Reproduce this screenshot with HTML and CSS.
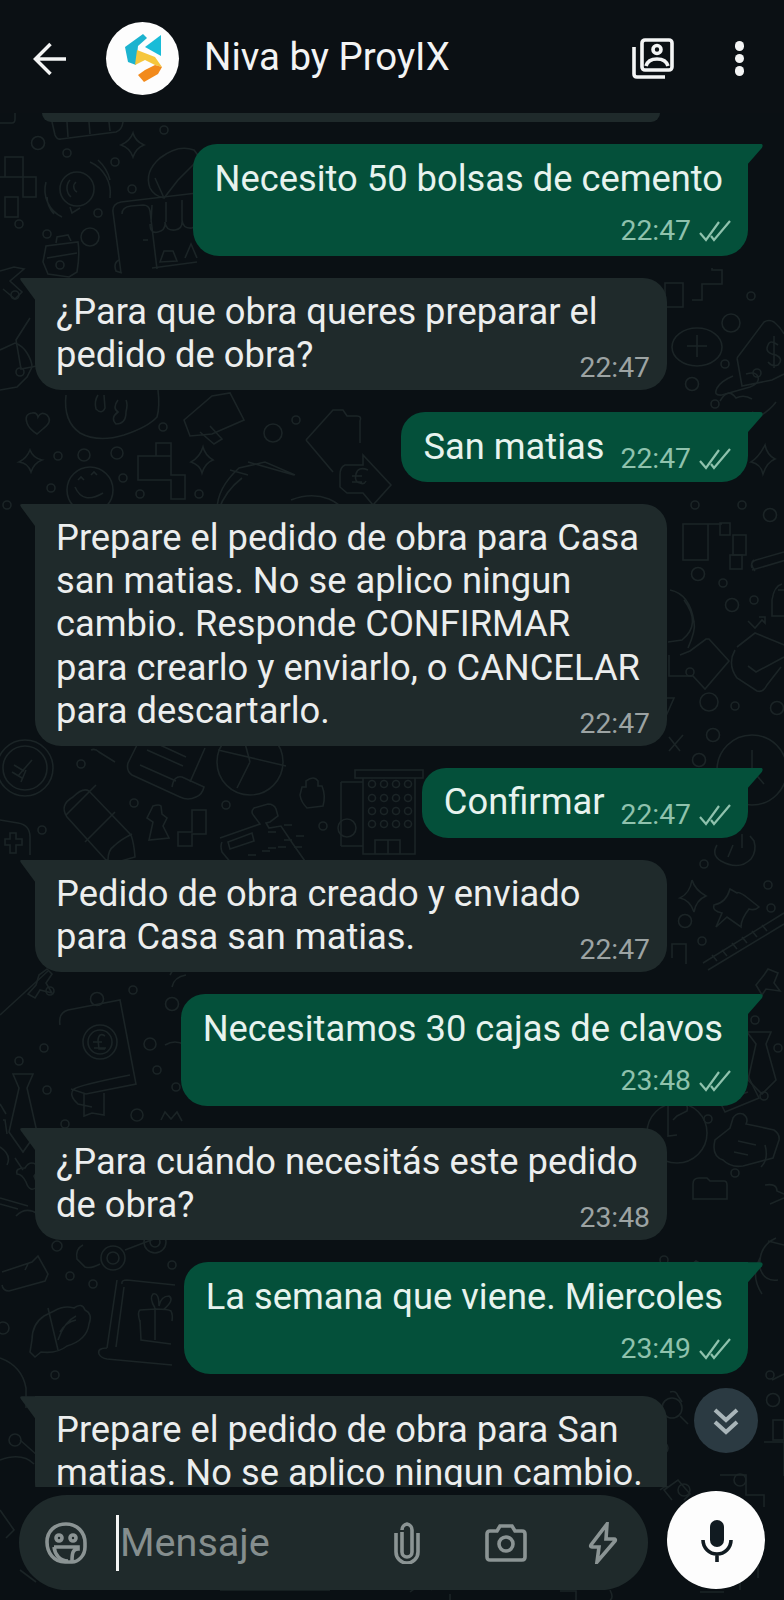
FILE: index.html
```html
<!DOCTYPE html>
<html>
	<head>
		<title>Niva by ProyIX</title>
		<link rel="stylesheet" href="styles.css">
	</head>
	<body>
		<div class="phone">
			<!-- wallpaper doodles sit behind everything -->
			<svg class="wallpaper" viewBox="0 0 784 1600" width="784" height="1600">
				<!-- small dots -->
				<circle cx="38" cy="143" r="6.5"/><circle cx="67" cy="153" r="4"/><circle cx="115" cy="162" r="4"/><circle cx="164" cy="130" r="4"/><circle cx="132" cy="189" r="4"/><circle cx="98" cy="213" r="4"/><circle cx="19" cy="224" r="4"/><circle cx="47" cy="234" r="4"/><circle cx="90" cy="237" r="9"/>
				<circle cx="15" cy="295" r="4"/><circle cx="163" cy="427" r="4"/><circle cx="273" cy="433" r="9"/><circle cx="296" cy="420" r="4"/><circle cx="58" cy="456" r="4"/><circle cx="84" cy="455" r="6"/><circle cx="117" cy="453" r="6"/><circle cx="123" cy="478" r="4"/><circle cx="51" cy="488" r="4"/><circle cx="140" cy="494" r="4"/><circle cx="199" cy="494" r="4"/><circle cx="7" cy="505" r="4"/>
				<circle cx="81" cy="764" r="4"/><circle cx="134" cy="803" r="4"/><circle cx="226" cy="805" r="4"/><circle cx="42" cy="830" r="4"/><circle cx="323" cy="826" r="4"/>
				<circle cx="50" cy="991" r="4"/><circle cx="97" cy="999" r="6.5"/><circle cx="133" cy="990" r="4"/><circle cx="172" cy="1004" r="6.5"/><circle cx="44" cy="1048" r="4"/><circle cx="150" cy="1044" r="6"/><circle cx="19" cy="1061" r="4"/><circle cx="157" cy="1070" r="4"/><circle cx="47" cy="1090" r="4"/><circle cx="176" cy="1087" r="4"/><circle cx="137" cy="1115" r="6"/><circle cx="65" cy="1124" r="4"/>
				<circle cx="57" cy="1246" r="5"/><circle cx="172" cy="1265" r="4"/><circle cx="70" cy="1276" r="4"/><circle cx="93" cy="1284" r="4"/><circle cx="55" cy="1375" r="4"/>
				<circle cx="751" cy="296" r="4"/><circle cx="731" cy="323" r="9"/><circle cx="725" cy="364" r="4"/><circle cx="692" cy="384" r="6.5"/><circle cx="715" cy="404" r="4"/><circle cx="695" cy="505" r="4"/><circle cx="742" cy="505" r="4"/><circle cx="770" cy="515" r="6.5"/><circle cx="698" cy="574" r="6.5"/><circle cx="723" cy="583" r="4"/><circle cx="732" cy="605" r="6.5"/><circle cx="754" cy="600" r="4"/><circle cx="690" cy="672" r="4"/><circle cx="709" cy="702" r="9"/><circle cx="735" cy="706" r="4"/><circle cx="777" cy="708" r="6.5"/><circle cx="713" cy="735" r="6.5"/><circle cx="699" cy="760" r="6.5"/>
				<circle cx="704" cy="864" r="4"/><circle cx="685" cy="921" r="6.5"/><circle cx="768" cy="885" r="4"/><circle cx="771" cy="908" r="4"/><circle cx="702" cy="941" r="4"/><circle cx="755" cy="1020" r="4"/><circle cx="778" cy="1048" r="4"/><circle cx="688" cy="1070" r="4"/><circle cx="764" cy="1096" r="4"/><circle cx="708" cy="1119" r="4"/><circle cx="735" cy="1173" r="4"/>
				<circle cx="664" cy="1260" r="4"/><circle cx="773" cy="1400" r="6.5"/><circle cx="770" cy="1375" r="4"/><circle cx="684" cy="1490" r="6"/><circle cx="740" cy="1480" r="6"/>
				<!-- top left -->
				<path d="M52 122l3 13q2 5 6 4l55-7q6-2 7-10M68 137l-1-15M90 134l-1-12M110 131l-1-9"/>
				<path d="M0 123h12q3 0 3-4v-6"/>
				<path d="M133 133q2 8 11 12q-8 3-11 12q-3-9-12-12q9-4 12-12z"/>
				<path d="M5 157h18v20h13v20h-13v-20h-18zM5 197h13v20h-13zM5 177h-5"/>
				<circle cx="77" cy="189" r="17"/><path d="M70 207l2 6l8-5M70 180a12 12 0 0 0 1 17M76 182a6 6 0 0 0 1 10M90 162a34 34 0 0 1 20 36M98 160a40 40 0 0 1 12 20M62 217a30 30 0 0 1-16-35M54 214a26 26 0 0 1-7-17"/>
				<path d="M150 188q-6-16 10-30q18-14 34-8l6 8l-22 22l-14 18q-10-2-14-10zM155 178l9 20"/>
				<path d="M113 212q-1-8 8-10l76-9M121 273l-8-61M122 214q0-7 9-8l12-1q6 0 7 6l7 58M143 240h5M122 273l-6-2q-3-8 3-11M150 224q0 10 8 8q8-2 7-10q1 9 10 8q8-1 7-10q1 9 10 8l4-2M152 205l-1 17M166 202v20M182 200v20"/>
				<path d="M160 262l4-11h9l4 10zM185 258l6-14l6 14M152 268l45-6"/>
				<path d="M43 262l3-16l32-4q2 12-1 30l-8 5l-21-3zM56 243l1-6l11-2l3 6M47 258l30-5"/><circle cx="60" cy="265" r="4"/>
				<path d="M0 271l14-4l10 2l-14 12l12 11l-7 7l-12-10"/>
				<!-- below first incoming bubble -->
				<path d="M0 350l15-7q8 3 12 10q5 8 5 14l-5 10l-10 10l-17 3"/>
				<path d="M30 318l-14 22l5 29l26-5"/><circle cx="20" cy="372" r="4"/>
				<path d="M27 423q-3-9 5-10q5-1 6 4q3-6 9-2q6 6-3 13l-7 6q-8-5-10-11z"/>
				<path d="M66 395q-3 26 14 38q18 10 44 2q24-8 33-18q3-10 1-27M98 395q-4 6-2 14q6 6 9-1l-1-13M118 400q-6 8 0 12q-8 6-2 12q10 0 10-12q2-8 0-12"/>
				<path d="M30 450q3 8 12 10q-8 3-11 12q-3-9-12-10q8-4 11-12z"/>
				<circle cx="90" cy="490" r="23"/><path d="M75 487q8 18 28 6M78 480l3-3l3 3M91 475l3-3l3 3"/>
				<path d="M138 480v-24h18v-13h15v32h14v24h-14v-19h-33zM156 456h15"/>
				<path d="M203 447q2 8 10 13q-8 3-11 13q-2-8-11-11q9-5 12-15z"/>
				<path d="M184 420l28-24l18-3l14 27l-32 14l-22 2zM200 432l14 12l8-5l-12-13"/>
				<path d="M217 510q0-22 22-42l26-6l30 13M248 462l46 13M218 512q6-20 24-34M230 470l18 5"/><path d="M291 500q20-8 38-1q18 8 16 22"/>
				<path d="M306 440l27-30h10l4 6h10q5 0 3 5v22M306 440l27 32M340 475q0-8 5-10h18v-10l28 30l-18 20l-10-12h-16l-7-6z"/><path d="M368 470q-10-4-12 4q-2 8 4 9q4 2 6-2M352 476h10M352 482h10"/>
				<!-- right side upper -->
				<path d="M665 283h18v24h-18zM692 300h10v-16h20v-14h-10v-2"/><ellipse cx="697" cy="347" rx="25" ry="19"/><path d="M697 335v22M687 346h20"/>
				<path d="M737 358l27-36q5-3 10 0q7 6 10 12M737 358l5 28l30-6l12-6M733 376q-12 5-16 12q-4 8 5 7l28-8q10-4 8-10q-2-6-12-3"/><circle cx="757" cy="373" r="4"/><path d="M778 345q-8-6-10 0q-4 8 8 10q8 4 2 10q-6 2-10-3M774 336v32"/>
				<path d="M720 401q8-14 16-3q8-4 16 1M752 412l8 4q10-6 16-14M752 412q6 6 8 4"/>
				<path d="M765 445q2 10 10 14q-8 3-12 15q-2-10-12-12q8-5 14-17z"/>
				<path d="M722 524h-14v36h-25v-36h25zM720 523h10v12h-10zM733 535h13v20h-13z"/>
				<path d="M730 555h12v14h-12z"/>
				<path d="M752 568q-2-6 4-8l28-8M755 571q-6-8-1-11M752 570l34-10"/>
				<path d="M778 590h6M772 600q2-14 10-16M772 600v16h12"/>
				<path d="M684 600q18 24-2 40l-14 2M670 590q20 4 24 32q2 8-6 26"/>
				<path d="M680 655l10-4l16-12h3l20 22l-24 28l-12-13h-24v-21"/>
				<path d="M748 621l7 7l7-8l3 3v-6h-6"/>
				<path d="M737 647l18-14l34 14M735 650q-8 14 2 28l20 13q6 2 10-6l14-18M748 666l8 6l28-15"/>
				<path d="M664 698h10l-8 18"/>
				<path d="M669 737l11 14M683 735l-14 16"/><circle cx="752" cy="770" r="35"/><path d="M752 750v20l12 14"/>
				<!-- building row -->
				<circle cx="25" cy="768" r="28"/><circle cx="25" cy="768" r="22"/><path d="M32 760l-14 16M26 770l-5 12M14 765l10 6M12 772l10 6"/>
				<path d="M91 750q4-2 8 2l16 10"/>
				<path d="M73 797q-14 8-6 20l38 42q5 4 16 2l14-4q-1-14-4-22l-42-44q-6-4-16 6zM66 815l30-30M85 842l30-30M108 860q0-10 6-14q6-6 18-12"/>
				<path d="M0 820l18 3q12 2 12 14v18M5 845v-6h5v-6h6v6h6v6h-6v8h-6v-8z"/>
				<path d="M137 745l-9 18q-2 8 4 12l48 22q8 4 16 0q6-2 8-10l-22-10q-8-2-10 10M205 748l-15 34M147 750l36 16M140 765l36 16M160 745l26 12"/>
				<circle cx="250" cy="762" r="33"/><path d="M250 762l-13 26M218 750l68 16M250 762l-8-30"/>
				<path d="M300 795l2-8h4v-6q8-6 12 0v5h4q4 10 1 20l-16 2q-6-6-7-13z"/>
				<path d="M150 812l3-6q6-2 8 0l1 8l5 4l-4 8l6 12l-20 2l4-18l-6-4z"/>
				<path d="M192 822v-12h14v24h-14v12h-14v-14h14zM192 834h14"/>
				<path d="M220 838l40-14l-6-8q-4-4 0-8l14-4q6 0 8 5l2 7l-8 6l-4 1l3 5l12-2l12 18l14 20M222 842q-2 4 0 10l10 12h40M228 842l24-9l2 8l-24 8z"/>
				<path d="M268 832h8M284 825h8M268 848h8M284 840h8M296 836h8M248 855h8M262 851h8M278 847h8M294 847h8"/>
				<path d="M355 770h68v8h-68zM363 778v76h52v-76M341 782v64M341 782h22M341 846h22"/><circle cx="347" cy="828" r="9"/><path d="M375 854v-14h25v14M388 840v14"/>
				<circle cx="372" cy="784" r="3.500"/><circle cx="384" cy="784" r="3.500"/><circle cx="396" cy="784" r="3.500"/><circle cx="408" cy="784" r="3.500"/><circle cx="372" cy="798" r="3.500"/><circle cx="384" cy="798" r="3.500"/><circle cx="396" cy="798" r="3.500"/><circle cx="408" cy="798" r="3.500"/><circle cx="372" cy="811" r="3.500"/><circle cx="384" cy="811" r="3.500"/><circle cx="396" cy="811" r="3.500"/><circle cx="408" cy="811" r="3.500"/><circle cx="372" cy="824" r="3.500"/><circle cx="384" cy="824" r="3.500"/><circle cx="396" cy="824" r="3.500"/><circle cx="408" cy="824" r="3.500"/>
				<!-- mid strip -->
				<path d="M60 960h-14M0 1015l48-44"/><path d="M170 975l7-12"/>
				<path d="M28 994l8-9l3-10l8-6l5 5l-6 9l6 10l-12-3l-5 8z"/>
				<path d="M60 1025q-2-12 8-15l52-10l16 84l-50 10l-15-5M130 1075q-50 10-56 14q-6 6 4 15l14 3M84 1094v22l8-3l12 2v-22"/><circle cx="100" cy="1042" r="17"/><circle cx="100" cy="1042" r="12"/><path d="M105 1036q-6-4-7 4l1 9h6M94 1048h12M93 1042h9"/>
				<path d="M13 1074h20l-6 14l10 44l-14 20l-14-20l10-44z"/><path d="M0 1104l6 10"/>
				<path d="M186 975q-12 2-14 12M165 1045q10-6 20 0"/><path d="M161 1120l4-8l6 7l6-7l5 9"/>
				<!-- right mid -->
				<path d="M717 845q-6 10 4 16q18 10 30-2q6-8 3-18l-4-5M733 845l-5 12M742 848v-14"/>
				<path d="M692 880q3 10 14 16q-10 4-12 16q-4-12-14-14q10-5 12-18z"/>
				<path d="M714 905q12-2 16-16l7 4q2-2 12 6l10 8q-4 4-10 2q-8 10-8 18l-14-10l-11 10l6-14q-10-2-8-8z"/>
				<path d="M703 963l81-50M708 970l76-46M712 955l5 6M722 950l5 6M732 943l5 6M742 937l5 6M752 931l5 6M762 925l5 6"/>
				<path d="M672 958v-14h14v20"/>
				<path d="M756 985l8-10l4-6l10 4l-4 10l6 8l-14-2l-4 6z"/>
				<path d="M747 1032h24l-5 12l10 36l-14 14l-14-14l8-36z"/><path d="M667 1060h6q8 2 14-2q6 0 4 6"/>
				<path d="M705 1072l34-14l20 40l-34 14zM712 1080l24-8M718 1090l24-8M724 1100l24-8"/>
				<path d="M730 1128l3-10q4-6 10-4q6 4 3 10l10 2l18 4q6 4 5 10l-6 18l-30 8q-12 2-20-6q-12-4-8-20z"/><path d="M738 1141l18 4M734 1152l14 3M765 1145q4 14-4 22"/>
				<path d="M667 1103q8 4 14 0q8 0 6 8l-10 5l-4 4"/><circle cx="677" cy="1133" r="30"/><path d="M668 1106v30l9-1"/>
				<path d="M693 1184q0-6 6-6h8l3 3h14q3 0 3 4v14h-34z"/>
				<path d="M765 1185q12-2 12 6l7 3"/><path d="M770 1204l14-6"/>
				<!-- lower left and right -->
				<path d="M0 1147q12 8 7 18M3 1120h2l2 14"/>
				<path d="M15 1158l8 12M25 1168q6-10 15 0l-6 8l4 10q-8 8-12-4q-4-8-9-8q-2-6 8-6z"/>
				<path d="M0 1198l28 8M0 1204l18 5M16 1216q10-10 22-2"/>
				<path d="M83 1245q-8 4-6 14l8 8q6 2 15-3"/><circle cx="113" cy="1258" r="12"/><circle cx="113" cy="1258" r="6"/><path d="M125 1250l34-13"/><circle cx="155" cy="1242" r="11"/><circle cx="155" cy="1242" r="5"/>
				<path d="M2 1272l30-10l6-6l10 18l-3 7l-36 10q-6 0-7-6M28 1264l-3 6"/>
				<circle cx="3" cy="1328" r="6"/>
				<path d="M32 1340q0-16 12-24l10-5q10-6 20-3q8-6 11 2q8 4 4 14q-2 16-22 22q-10 8-26 6l-6 5l-5-5zM48 1308l10 42M58 1340q6-18 18-24M60 1332q6-10 16-12"/>
				<path d="M117 1280l-10 68M122 1284q-1-4 5-4l48 5M124 1287l-8 60M107 1348q-10 0-8 6q2 4 8 5l65 6"/><path d="M140 1322q-3-10 0-12l16-1q12 0 15 2q2 4 1 10M140 1320l1 20l30 4M155 1308v32M155 1308q-6-10-2-14q6-2 6 12q2-10 10-10q6 4-6 14"/>
				<path d="M0 1358q22 8 26 30v20M70 1412l18 14q6 8 0 10M84 1400l16 12"/>
				<circle cx="15" cy="1440" r="6"/><path d="M0 1460q22-8 34 4M20 1440l34 30"/>
				<path d="M0 1510l14 20l-8 8M20 1570l16 12"/>
				<path d="M760 1258q-10 18 2 36M776 1238q-18 8-16 30q4 14 18 12M668 1265l15 3l-8 16l-20-2M784 1245l-16-4"/>
				<path d="M668 1283l28-22q8 4 12 12l-6 8l-24 10M686 1265h-14v10"/>
				<path d="M690 1310q14 10 30 0M670 1392q6-2 8 4l4 6"/>
				<path d="M772 1380l12-6M764 1442h20v34"/><circle cx="662" cy="1448" r="6"/><circle cx="672" cy="1408" r="10"/><path d="M680 1416l8 8"/>
				<path d="M773 1420h11v20h-11z"/>
				<path d="M660 1490q6-5 8-3M672 1500l-8-10l14-10l12 14l-6 6M720 1475h26v20h18v12M740 1590v-24h18v12M700 1592h24"/>
				<!-- between composer and bubble -->
				<path d="M410 1592q12-10 22-2M220 1590h110M450 1594v6M560 1591h16v9M610 1590q4 8 0 10"/>
			</svg>

			<header class="topbar">
				<svg class="back" viewBox="0 0 34 34" width="34" height="34"><path d="M33 17H3M17.500 2L2.500 17L17.500 32"/></svg>
				<div class="avatar">
					<svg viewBox="6 7 73 73" width="73" height="73">
						<path fill="#1cb3cf" d="M25 32L43 19L47 23L38 31L36 50L28 47z"/>
						<path fill="#19bcd8" d="M45 32L61 20V41z"/>
						<path fill="#f6c63c" d="M37 35L55 42L62 52L55 50L45 45L35 50z"/>
						<path fill="#f28a1c" d="M38 60L45 55L55 50L62 52L58 59L44 67z"/>
					</svg>
				</div>
				<span class="title">Niva by ProyIX</span>
				<svg class="gallery" viewBox="0 0 42 41" width="42" height="41">
					<rect x="10" y="2" width="30" height="30" rx="3"/>
					<path d="M2 9V36q0 3 3 3H33"/>
					<circle cx="25" cy="11.500" r="4"/>
					<path d="M14 28q2-7 11-7q9 0 11 7"/>
				</svg>
				<div class="dots"><i></i><i></i><i></i></div>
			</header>

			<main class="messages">
				<div class="peek"></div>

				<div class="msg out">
					<p>Necesito 50 bolsas de cemento</p>
					<span class="meta">22:47 <svg class="ticks" viewBox="0 0 32 22" width="32" height="22"><path d="M1 13l6 7L20 2M12 16l3 4L31 1"/></svg></span>
				</div>
				<div class="msg in">
					<p>¿Para que obra queres preparar el pedido de obra?<span class="meta">22:47</span></p>
				</div>
				<div class="msg out short">
					<p>San matias</p>
					<span class="meta">22:47 <svg class="ticks" viewBox="0 0 32 22" width="32" height="22"><path d="M1 13l6 7L20 2M12 16l3 4L31 1"/></svg></span>
				</div>
				<div class="msg in">
					<p>Prepare el pedido de obra para Casa san matias. No se aplico ningun cambio. Responde CONFIRMAR para crearlo y enviarlo, o CANCELAR para descartarlo.<span class="meta">22:47</span></p>
				</div>
				<div class="msg out short">
					<p>Confirmar</p>
					<span class="meta">22:47 <svg class="ticks" viewBox="0 0 32 22" width="32" height="22"><path d="M1 13l6 7L20 2M12 16l3 4L31 1"/></svg></span>
				</div>
				<div class="msg in">
					<p>Pedido de obra creado y enviado para Casa san matias.<span class="meta">22:47</span></p>
				</div>
				<div class="msg out">
					<p>Necesitamos 30 cajas de clavos</p>
					<span class="meta">23:48 <svg class="ticks" viewBox="0 0 32 22" width="32" height="22"><path d="M1 13l6 7L20 2M12 16l3 4L31 1"/></svg></span>
				</div>
				<div class="msg in">
					<p>¿Para cuándo necesitás este pedido de obra?<span class="meta">23:48</span></p>
				</div>
				<div class="msg out">
					<p>La semana que viene. Miercoles</p>
					<span class="meta">23:49 <svg class="ticks" viewBox="0 0 32 22" width="32" height="22"><path d="M1 13l6 7L20 2M12 16l3 4L31 1"/></svg></span>
				</div>
				<div class="msg in">
					<p>Prepare el pedido de obra para San matias. No se aplico ningun cambio.</p>
				</div>
			</main>

			<button class="scroll-down">
				<svg viewBox="0 0 26 28" width="26" height="28"><path d="M2 3l11 10L24 3M2 15l11 10L24 15"/></svg>
			</button>

			<footer class="bottom">
				<div class="composer">
					<svg class="sticker" viewBox="0 0 42 42" width="42" height="42">
						<path d="M27 40H20C9 40 2 31 2 20C2 9 10 2 21 2C32 2 40 10 40 21V25C40 34 33 40 27 40z"/>
						<path d="M9 25H33V27C28 27 27 31 27 39M9 25C10 33 15 39 23 39"/>
						<circle cx="14" cy="16" r="3"/><circle cx="28" cy="16" r="3"/>
					</svg>
					<span class="caret"></span>
					<span class="placeholder">Mensaje</span>
					<svg class="clip" viewBox="0 0 26 42" width="26" height="42"><path d="M8 10V30a5 5 0 0 0 10 0V8a6 6 0 0 0-5-6a6 6 0 0 0-5 6M2 11V30a11 11 0 0 0 22 0V11"/></svg>
					<svg class="camera" viewBox="0 0 42 38" width="42" height="38">
						<path d="M2 10q0-3 3-3h7l3-5h12l3 5h7q3 0 3 3v23q0 3-3 3H5q-3 0-3-3z"/>
						<circle cx="21" cy="20" r="7"/>
					</svg>
					<svg class="bolt" viewBox="0 0 30 42" width="30" height="42"><path d="M19 2L3 23q-1 2 1 2H11L9 40L27 19q1-2-1-2H18z"/></svg>
				</div>
				<div class="mic">
					<svg viewBox="0 0 40 44" width="40" height="44"><rect x="14" y="2" width="14" height="27" rx="7" class="mic-head"/><path d="M7 22a14 14 0 0 0 28 0M21 36v8"/></svg>
				</div>
			</footer>
		</div>
	</body>
</html>
```

FILE: styles.css
```css
html, body {
	margin: 0;
	background: #0b1014;
}

.phone {
	--bubble-in: #1f2a2b;
	--bubble-out: #04503a;
	position: relative;
	display: flex;
	flex-direction: column;
	width: 784px;
	height: 1600px;
	overflow: hidden;
	background: #0a1014;
	font-family: Roboto, sans-serif;
}

.wallpaper {
	position: absolute;
	left: 0;
	top: 0;
	fill: none;
	stroke: #1b2426;
	stroke-width: 1.6;
}

/* header */
.topbar {
	position: relative;
	display: flex;
	flex-shrink: 0;
	align-items: center;
	height: 113px;
	padding: 4px 40px 0 33px;
	box-sizing: border-box;
	background: #0b1014;
	color: #fff;
}

.back {
	fill: none;
	stroke: #f4f5f5;
	stroke-width: 3.5;
}

.avatar {
	display: flex;
	width: 73px;
	height: 73px;
	margin-left: 39px;
	border-radius: 50%;
	background: #fdfdfd;
}

.title {
	flex: 1;
	margin: 0 0 4px 25px;
	font-size: 38.400px;
	color: #f3f4f4;
}

.gallery {
	fill: none;
	stroke: #f4f5f5;
	stroke-width: 3.6;
}

.dots {
	display: flex;
	flex-direction: column;
	gap: 3px;
	margin-left: 61px;
}

.dots i {
	width: 9.500px;
	height: 9.500px;
	border-radius: 50%;
	background: #f4f5f5;
}

/* conversation */
.messages {
	position: relative;
	display: flex;
	flex: 1;
	flex-direction: column;
	gap: 21.800px;
	min-height: 0;
	overflow: hidden;
}

.peek {
	flex-shrink: 0;
	width: 618px;
	height: 9px;
	margin-left: 42px;
	border-radius: 0 0 14px 14px;
	background: var(--bubble-in);
}

.msg {
	position: relative;
	flex-shrink: 0;
	box-sizing: border-box;
	font-size: 36.300px;
	line-height: 43.200px;
}

.msg p {
	margin: 0;
}

.msg::after {
	content: "";
	position: absolute;
	top: 0;
	width: 16px;
	height: 22px;
}

.out {
	display: flex;
	flex-direction: column;
	align-items: flex-end;
	align-self: flex-end;
	margin-right: 36px;
	padding: 13px 25px 13px 22px;
	border-radius: 24px 0 26px 26px;
	background: var(--bubble-out);
	color: #e7f3ee;
}

.out::after {
	left: 100%;
	background: var(--bubble-out);
	clip-path: path("M0 0H12Q16 0 14 4L0 20Z");
}

.short {
	flex-direction: row;
	gap: 16px;
	padding-top: 12.500px;
	padding-bottom: 14.500px;
}

.in {
	width: 632px;
	margin-left: 35px;
	padding: 12px 21px 14px;
	border-radius: 0 24px 26px 26px;
	background: var(--bubble-in);
	color: #eceeee;
}

.in::after {
	right: 100%;
	background: var(--bubble-in);
	clip-path: path("M16 0H3Q0 0 2 3L16 22Z");
}

.in p {
	display: flow-root;
}

.meta {
	display: flex;
	align-items: center;
	gap: 8px;
	height: 30px;
	margin: 16px -8px -3px 0;
	font-size: 28.300px;
	line-height: 30px;
	color: #8fc2ad;
}

.short .meta {
	margin-top: 19px;
	margin-bottom: -6px;
}

.in .meta {
	float: right;
	margin: 20px -4px -7px 16px;
	color: #9ca3a3;
}

.ticks {
	fill: none;
	stroke: #8fc2ad;
	stroke-width: 2.2;
}

.scroll-down {
	position: absolute;
	right: 26px;
	top: 1388px;
	display: flex;
	align-items: center;
	justify-content: center;
	width: 64px;
	height: 65px;
	padding: 0;
	border: 0;
	border-radius: 50%;
	background: #2b3a42;
}

.scroll-down svg {
	fill: none;
	stroke: #a9b5b9;
	stroke-width: 4;
}

/* bottom bar */
.bottom {
	position: relative;
	display: flex;
	flex-shrink: 0;
	gap: 19px;
	height: 113px;
	padding: 4px 0 0 19px;
	box-sizing: border-box;
}

.composer {
	display: flex;
	align-items: center;
	width: 629px;
	height: 95px;
	margin-top: 4px;
	padding: 0 30px 0 26px;
	box-sizing: border-box;
	border-radius: 48px;
	background: var(--bubble-in);
}

.composer svg {
	flex-shrink: 0;
	fill: none;
	stroke: #8b9494;
	stroke-width: 3.6;
}

.caret {
	width: 3px;
	height: 56px;
	margin-left: 29px;
	background: #f4f5f5;
}

.placeholder {
	flex: 1;
	margin-left: 1px;
	font-size: 39.600px;
	color: #858e8e;
}

.camera {
	margin-left: 65px;
}

.bolt {
	margin-left: 61px;
}

.mic {
	display: flex;
	align-items: center;
	justify-content: center;
	width: 98px;
	height: 98px;
	border-radius: 50%;
	background: #fdfdfd;
}

.mic svg {
	fill: none;
	stroke: #111b21;
	stroke-width: 3.6;
}

.mic .mic-head {
	fill: #111b21;
	stroke: none;
}
```
